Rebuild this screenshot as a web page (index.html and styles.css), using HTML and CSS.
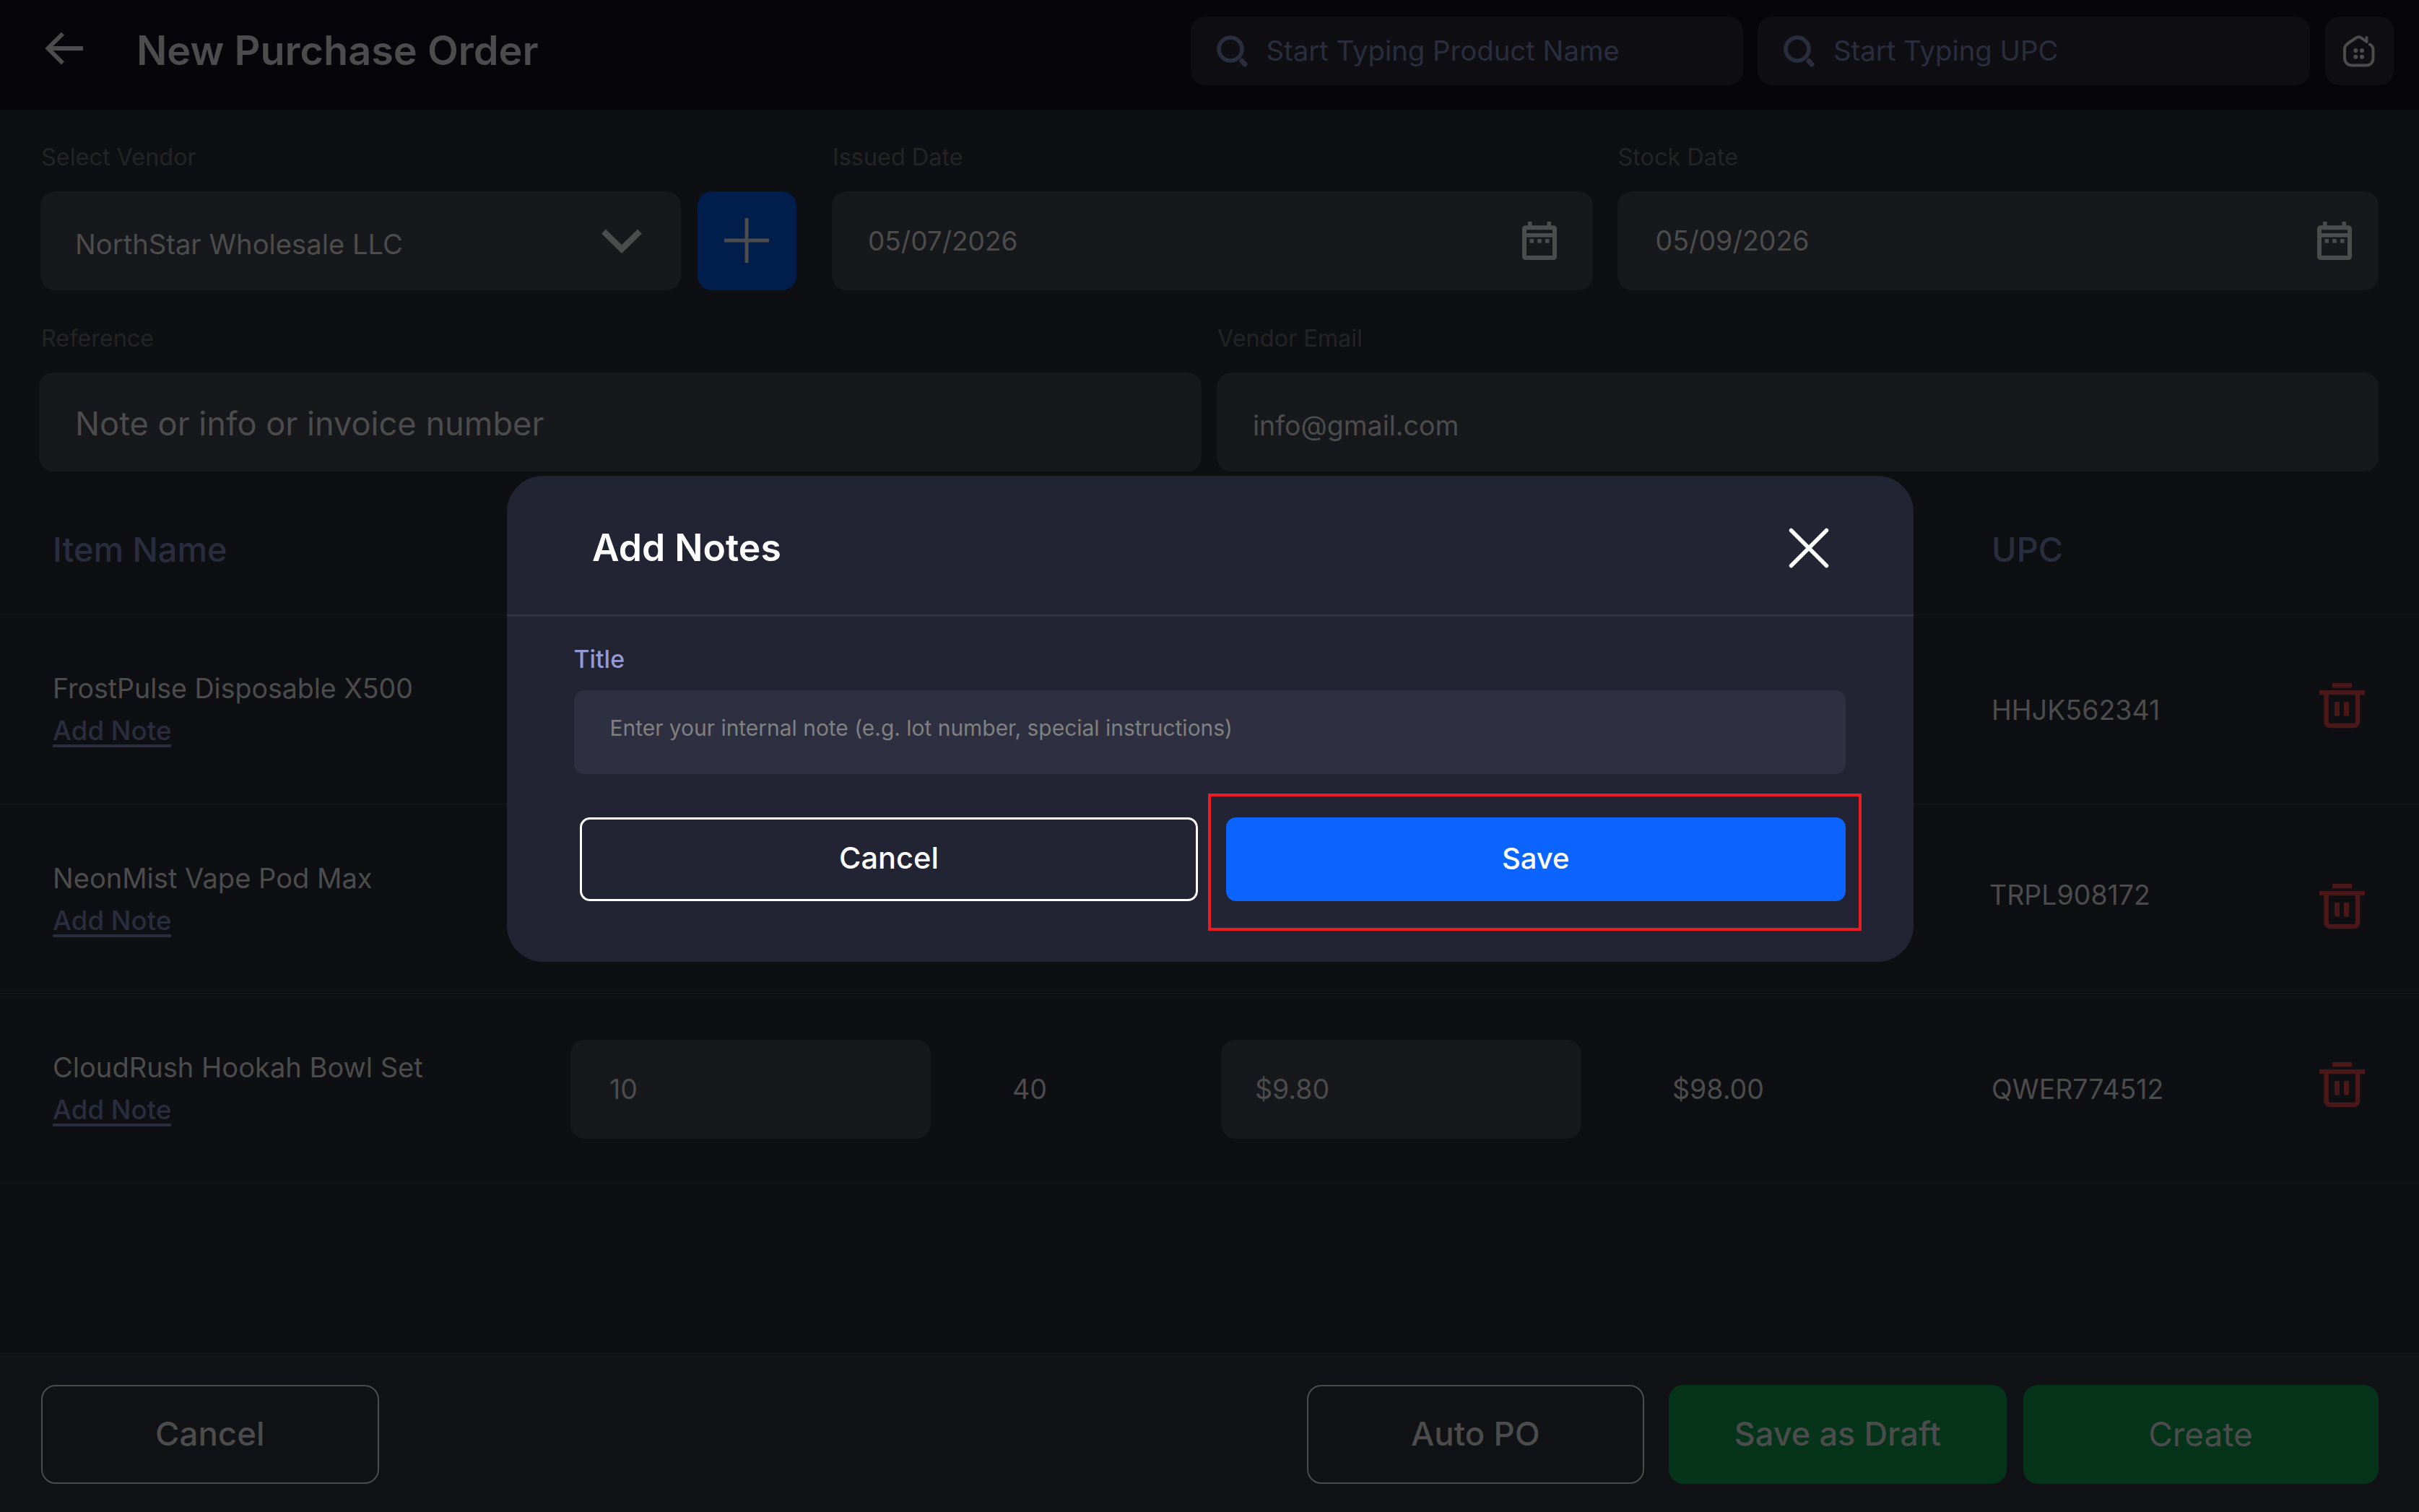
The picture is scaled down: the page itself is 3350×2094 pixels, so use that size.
FILE: index.html
```
<!DOCTYPE html>
<html lang="en">
<head>
  <meta charset="UTF-8" />
  <meta name="viewport" content="width=device-width, initial-scale=1.0" />
  <title>New Purchase Order</title>
  <link rel="stylesheet" href="styles.css">
</head>
<body>
  <!-- Shared icons -->
  <svg class="sprite" width="0" height="0">
    <symbol id="icon-search" viewBox="0 0 44 44">
      <circle cx="19" cy="19" r="16" fill="none" stroke="currentColor" stroke-width="5.5" />
      <path d="M35 35.5l4 4.5" fill="none" stroke="currentColor" stroke-width="7" stroke-linecap="round" />
    </symbol>
    <symbol id="icon-calendar" viewBox="0 0 48 53">
      <path d="M8 0h5.5v6H8zM34.5 0H40v6h-5.5z" fill="currentColor" />
      <rect x="3" y="8.2" width="42" height="41.8" rx="1.5" fill="none" stroke="currentColor" stroke-width="6" />
      <path d="M3 16h42v5.5H3zM10.5 24H16v5.5h-5.5zM21.2 24h5.6v5.5h-5.6zM32 24h5.5v5.5H32z" fill="currentColor" />
    </symbol>
    <symbol id="icon-trash" viewBox="0 0 63 63">
      <path d="M18 0h27v6.5H18zM0 10h63v6.3H0zM21 26h7v19.5h-7zM34 26h7v19.5h-7z" fill="currentColor" />
      <path d="M9.6 15v39a5 5 0 0 0 5 5h33.5a5 5 0 0 0 5-5V15" fill="none" stroke="currentColor" stroke-width="6.5" />
    </symbol>
  </svg>

  <!-- Top bar -->
  <header class="topbar">
    <svg class="back" viewBox="0 0 54 46" fill="none" stroke="currentColor" stroke-width="6">
      <path d="M53 23H5M25 2.5L4.5 23 25 43.5" />
    </svg>
    <h1>New Purchase Order</h1>
    <div class="search"><svg><use href="#icon-search" /></svg>Start Typing Product Name</div>
    <div class="search"><svg><use href="#icon-search" /></svg>Start Typing UPC</div>
    <div class="home">
      <svg viewBox="0 0 44 44" fill="none" stroke="currentColor" stroke-width="4" stroke-linecap="round" stroke-linejoin="round">
        <path d="M37 12.5c3 1.5 4.5 4 4.5 7.5v11.500c0 6-4 10-10 10h-19c-6 0-10.500-4-10.500-10V19c0-3.500 1.500-5.500 4-7.500L17 4c3-2.300 6-2.300 9 0l6.500 5V3" />
        <g fill="currentColor" stroke="none">
          <circle cx="17.3" cy="21" r="3" /><circle cx="26" cy="21" r="3" />
          <circle cx="17.3" cy="29.7" r="3" /><circle cx="26" cy="29.7" r="3" />
        </g>
      </svg>
    </div>
  </header>

  <!-- Order details -->
  <section class="form">
    <div class="row">
      <div class="group vendor">
        <label>Select Vendor</label>
        <div class="vendor-line">
          <div class="field select">
            <span>NorthStar Wholesale LLC</span>
            <svg class="chevron" viewBox="0 0 56 34" fill="none" stroke="currentColor" stroke-width="8.5"><path d="M3 3.5l25 24.5 25-24.500" /></svg>
          </div>
          <div class="plus">
            <svg viewBox="0 0 62 62" stroke="currentColor" stroke-width="5"><path d="M31 0v62M0 31h62" /></svg>
          </div>
        </div>
      </div>
      <div class="group issued">
        <label>Issued Date</label>
        <div class="field date"><span>05/07/2026</span><svg><use href="#icon-calendar" /></svg></div>
      </div>
      <div class="group stock">
        <label>Stock Date</label>
        <div class="field date"><span>05/09/2026</span><svg><use href="#icon-calendar" /></svg></div>
      </div>
    </div>
    <div class="row row-two">
      <div class="group reference">
        <label>Reference</label>
        <div class="field">Note or info or invoice number</div>
      </div>
      <div class="group email">
        <label>Vendor Email</label>
        <div class="field">info@gmail.com</div>
      </div>
    </div>
  </section>

  <!-- Items -->
  <main class="items">
    <div class="item head">
      <div>Item Name</div>
      <div class="upc">UPC</div>
    </div>
    <div class="item">
      <div class="name">FrostPulse Disposable X500<a>Add Note</a></div>
      <div class="upc">HHJK562341</div>
      <svg class="trash t1"><use href="#icon-trash" /></svg>
    </div>
    <div class="item">
      <div class="name wide">NeonMist Vape Pod Max<a>Add Note</a></div>
      <div class="upc raised">TRPL908172</div>
      <svg class="trash t2"><use href="#icon-trash" /></svg>
    </div>
    <div class="item">
      <div class="name wide">CloudRush Hookah Bowl Set<a>Add Note</a></div>
      <div class="field qty">10</div>
      <div class="stock-qty">40</div>
      <div class="field price">$9.80</div>
      <div class="total">$98.00</div>
      <div class="upc">QWER774512</div>
      <svg class="trash t3"><use href="#icon-trash" /></svg>
    </div>
  </main>

  <!-- Bottom actions -->
  <footer class="actions">
    <button class="outline">Cancel</button>
    <button class="outline auto">Auto PO</button>
    <button class="green draft">Save as Draft</button>
    <button class="green create">Create</button>
  </footer>

  <!-- Add Notes dialog -->
  <div class="overlay">
    <div class="modal">
      <div class="modal-head">
        <h2>Add Notes</h2>
        <svg class="close" viewBox="0 0 56 56" stroke="currentColor" stroke-width="5.5" stroke-linecap="round"><path d="M3.5 3.5l49 49M52.5 3.5l-49 49" /></svg>
      </div>
      <div class="modal-body">
        <label>Title</label>
        <div class="note">Enter your internal note (e.g. lot number, special instructions)</div>
        <div class="modal-actions">
          <button class="cancel">Cancel</button>
          <div class="save-wrap">
            <button class="save">Save</button>
            <div class="highlight"></div>
          </div>
        </div>
      </div>
    </div>
  </div>
</body>
</html>
```
FILE: styles.css
```
* { box-sizing: border-box; }
body {
  margin: 0;
  height: 2094px;
  display: flex;
  flex-direction: column;
  overflow: hidden;
  background: #0e0f13;
  color: #4c4c4c;
  font-family: Inter, "Liberation Sans", sans-serif;
  font-size: 37.5px;
  line-height: 1;
}
h1, h2 { margin: 0; }
svg { display: block; flex: none; }
.sprite { position: absolute; }
button {
  font: inherit;
  color: inherit;
  padding: 0;
  border: none;
  background: none;
}

/* top bar */
.topbar {
  height: 152px;
  padding: 23px 35.5px 0 62px;
  display: flex;
  align-items: flex-start;
  background: #05050a;
}
.back { width: 54px; height: 46px; margin-top: 21px; }
h1 {
  margin: 19px auto 0 70px;
  padding-left: 3px;
  font-size: 55.8px;
  font-weight: 600;
}
.search {
  width: 765px;
  height: 95px;
  margin-right: 20.5px;
  padding-left: 36px;
  display: flex;
  align-items: center;
  gap: 25px;
  border-radius: 20px;
  background: #0f0f13;
  color: #292d3e;
  font-size: 38.3px;
}
.search svg { width: 44px; height: 44px; }
.home {
  width: 95px;
  height: 95px;
  display: flex;
  align-items: center;
  justify-content: center;
  border-radius: 20px;
  background: #0f0f13;
}
.home svg { width: 44px; height: 44px; }

/* form */
.form { height: 502px; padding: 46px 56.5px 0 54px; }
.row { display: flex; }
.row-two { margin-top: 47px; }
.group label {
  display: block;
  height: 40px;
  margin-bottom: 27px;
  padding-left: 1px;
  line-height: 40px;
  color: #242424;
  font-size: 32.4px;
}
.field {
  height: 137px;
  padding: 0 50px;
  display: flex;
  align-items: center;
  border-radius: 20px;
  background: #17181c;
}
.vendor { width: 1047px; margin: 0 49px 0 2px; }
.vendor-line { display: flex; gap: 22.5px; }
.select { width: 887px; justify-content: space-between; padding: 0 54px 0 48px; font-size: 38.2px; }
.select span { padding-top: 9px; }
.chevron { width: 56px; height: 34px; }
.plus {
  width: 137.5px;
  height: 137px;
  display: flex;
  align-items: center;
  justify-content: center;
  border-radius: 20px;
  background: #001d4c;
}
.plus svg { width: 62px; height: 62px; margin-top: -2px; }
.date { width: 1054px; justify-content: space-between; font-size: 37px; }
.date svg { width: 48px; height: 53px; }
.issued { margin-right: 33.5px; }
.stock .date { padding: 0 37px 0 53px; font-size: 37.5px; }
.reference { width: 1610px; margin-right: 21px; }
.reference label { padding-left: 3px; }
.reference .field { padding-top: 4px; font-size: 45.2px; }
.email { flex: 1; }
.email .field { padding-top: 10px; font-size: 37.5px; }

/* items */
.item {
  height: 262.5px;
  padding-left: 73px;
  display: grid;
  grid-template-columns: 717px 612px 289px 625px 442px 454px 63px;
  grid-template-rows: 100%;
  align-items: center;
  border-bottom: 2px solid #131418;
}
.item > * { grid-row: 1; position: relative; }
.head {
  height: 198px;
  padding-top: 18px;
  color: #292d3e;
  font-size: 46.8px;
  font-weight: 500;
}
.name { display: flex; flex-direction: column; align-items: flex-start; padding-top: 5px; }
.wide { font-size: 38.1px; }
.name a {
  margin-top: 22px;
  border-bottom: 4px solid #292d3e;
  color: #292d3e;
  font-size: 36.7px;
  font-weight: 500;
}
.qty { width: 499px; margin-top: 2px; padding: 0 54px; }
.stock-qty, .total, .upc { padding-top: 2px; }
.price { width: 499px; margin-top: 2px; padding: 0 47px; }
.upc { grid-column: 6; }
.head .upc { padding-top: 0; }
.raised { margin: 0 0 12px -3px; }
.trash { grid-column: 7; width: 63px; height: 63px; color: #4b1819; }
.t1 { margin-bottom: 9px; }
.t2 { margin-top: 22px; }
.t3 { margin-bottom: 9px; }

/* bottom actions */
.actions {
  height: 221px;
  margin-top: auto;
  padding: 45px 56.5px 0 57px;
  display: flex;
  background: #111215;
  font-size: 45.6px;
  font-weight: 500;
}
.actions button {
  width: 467.5px;
  height: 137px;
  padding-bottom: 2px;
  border-radius: 20px;
}
.actions .outline { border: 2.5px solid #4c4c4c; }
.auto { margin-left: auto; }
.actions .green { background: #05341b; }
.actions .draft { margin: 0 23px 0 34px; font-size: 45.2px; }
.actions .create { width: 492px; font-size: 46px; font-weight: 400; }

/* dialog */
.overlay {
  position: fixed;
  inset: 0;
  padding-top: 659px;
}
.modal {
  width: 1948px;
  height: 673px;
  margin-left: 702px;
  border-radius: 50px;
  background: #222433;
  color: #fff;
}
.modal-head {
  height: 195px;
  padding: 7px 117px 0 118px;
  display: flex;
  align-items: center;
  justify-content: space-between;
  border-bottom: 3px solid #303345;
}
h2 { font-size: 51.7px; font-weight: 600; }
.close { width: 56px; height: 56px; }
.modal-body { padding: 39px 94.5px 0 92.5px; }
.modal-body label {
  display: block;
  height: 40px;
  margin-bottom: 23px;
  line-height: 40px;
  color: #949bd3;
  font-size: 33.8px;
  font-weight: 500;
}
.note {
  height: 116px;
  padding: 0 50px 11px;
  display: flex;
  align-items: center;
  border-radius: 14px;
  background: #2e3041;
  color: #808080;
  font-size: 29.95px;
}
.modal-actions { display: flex; gap: 39px; margin: 60px 0 0 8.5px; }
.modal-actions button {
  width: 100%;
  height: 116px;
  padding-bottom: 2px;
  border-radius: 14px;
  font-size: 41.5px;
  font-weight: 500;
}
.modal-actions .cancel { width: 856px; border: 3px solid #fff; }
.save-wrap { flex: 1; position: relative; }
.modal-actions .save { background: #0a64fd; font-size: 40px; }
.highlight {
  position: absolute;
  top: -33px;
  right: -22.5px;
  bottom: -41px;
  left: -25px;
  border: 4px solid #ed1c24;
}
```
